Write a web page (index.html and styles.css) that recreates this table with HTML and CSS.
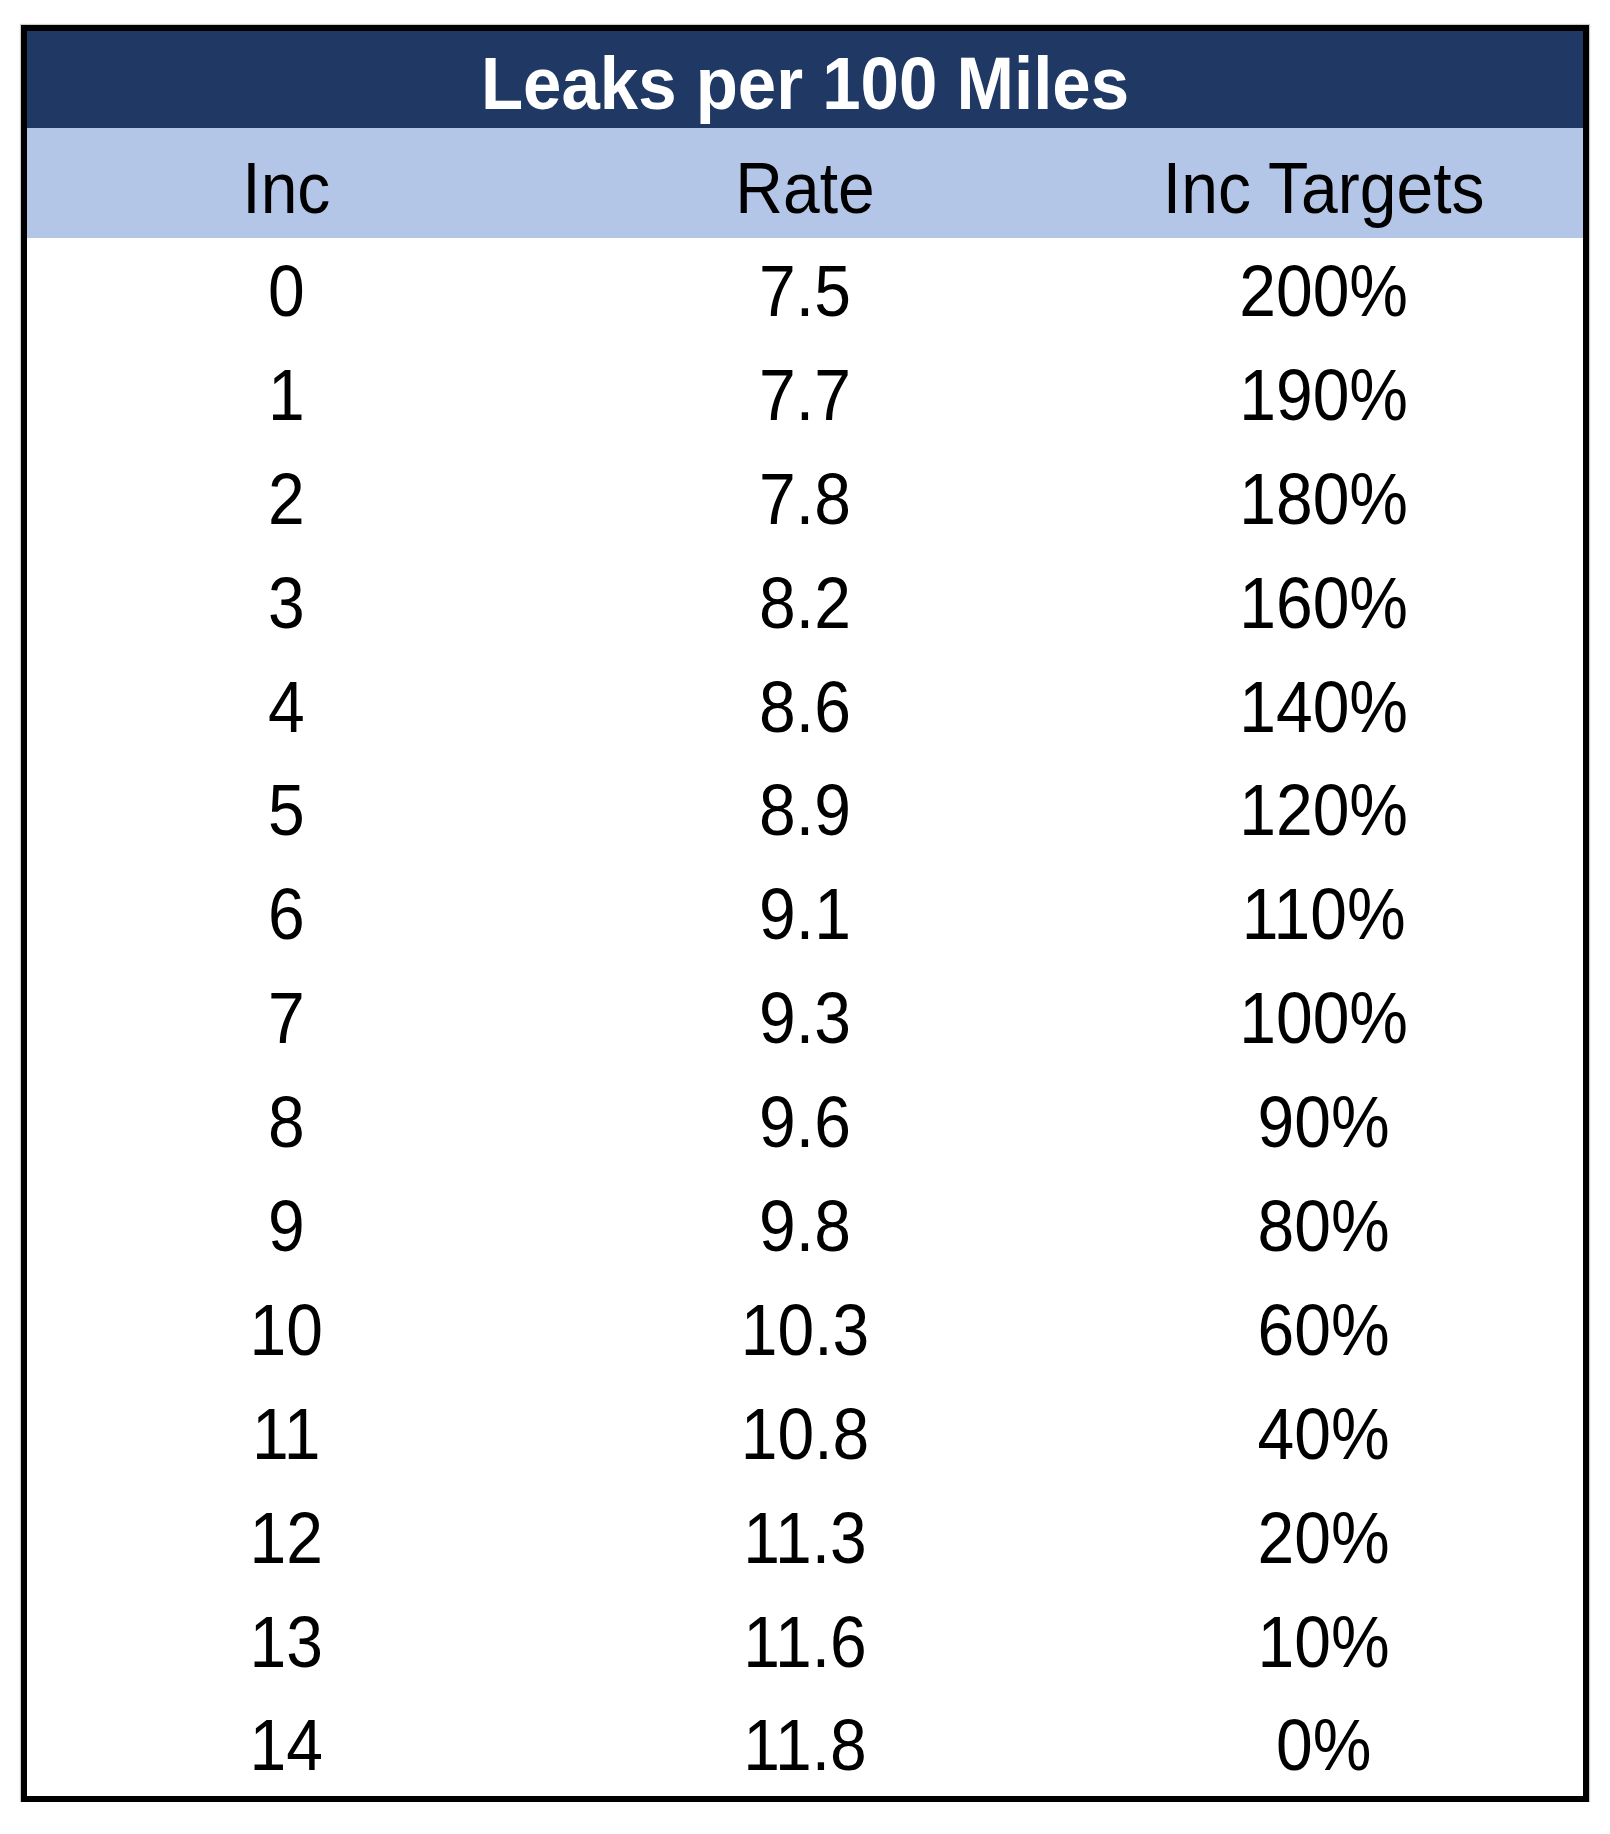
FILE: index.html
```html
<!DOCTYPE html>
<html>
<head>
<meta charset="utf-8">
<link rel="stylesheet" href="styles.css">
</head>
<body>
<div class="sheet">
  <div class="title"><span class="title-text">Leaks per 100 Miles</span></div>
  <div class="colhead">
    <div class="cell">Inc</div>
    <div class="cell">Rate</div>
    <div class="cell">Inc Targets</div>
  </div>
  <div class="body">
    <div class="row"><div class="cell">0</div><div class="cell">7.5</div><div class="cell">200%</div></div>
    <div class="row"><div class="cell">1</div><div class="cell">7.7</div><div class="cell">190%</div></div>
    <div class="row"><div class="cell">2</div><div class="cell">7.8</div><div class="cell">180%</div></div>
    <div class="row"><div class="cell">3</div><div class="cell">8.2</div><div class="cell">160%</div></div>
    <div class="row"><div class="cell">4</div><div class="cell">8.6</div><div class="cell">140%</div></div>
    <div class="row"><div class="cell">5</div><div class="cell">8.9</div><div class="cell">120%</div></div>
    <div class="row"><div class="cell">6</div><div class="cell">9.1</div><div class="cell">110%</div></div>
    <div class="row"><div class="cell">7</div><div class="cell">9.3</div><div class="cell">100%</div></div>
    <div class="row"><div class="cell">8</div><div class="cell">9.6</div><div class="cell">90%</div></div>
    <div class="row"><div class="cell">9</div><div class="cell">9.8</div><div class="cell">80%</div></div>
    <div class="row"><div class="cell">10</div><div class="cell">10.3</div><div class="cell">60%</div></div>
    <div class="row"><div class="cell">11</div><div class="cell">10.8</div><div class="cell">40%</div></div>
    <div class="row"><div class="cell">12</div><div class="cell">11.3</div><div class="cell">20%</div></div>
    <div class="row"><div class="cell">13</div><div class="cell">11.6</div><div class="cell">10%</div></div>
    <div class="row"><div class="cell">14</div><div class="cell">11.8</div><div class="cell">0%</div></div>
  </div>
</div>
</body>
</html>
```

FILE: styles.css
```css
html, body {
  margin: 0;
  padding: 0;
  background: #ffffff;
}

body {
  font-family: "Liberation Sans", Arial, sans-serif;
  color: #000000;
}

.sheet {
  margin: 25px 0 0 21px;
  width: 1568px;
  box-sizing: border-box;
  border: 6px solid #000000;
  box-shadow: 0 0 1px 1px rgba(0, 0, 0, 0.2);
  background: #ffffff;
}

.title {
  height: 97px;
  box-sizing: border-box;
  padding-top: 8px;
  background: #203864;
  color: #ffffff;
  font-weight: bold;
  font-size: 69px;
  line-height: 89px;
  text-align: center;
}

.title-text {
  display: inline-block;
  transform: scaleY(1.08);
}

.colhead {
  display: grid;
  grid-template-columns: 1fr 1fr 1fr;
  height: 110px;
  box-sizing: border-box;
  padding-top: 10px;
  background: #b4c6e7;
}

.colhead .cell {
  font-size: 66px;
  line-height: 100px;
  text-align: center;
  transform: scaleY(1.1);
}

.body {
  display: grid;
  grid-auto-rows: 103.9px;
}

.row {
  display: grid;
  grid-template-columns: 1fr 1fr 1fr;
  box-sizing: border-box;
  padding-top: 4px;
}

.row .cell {
  font-size: 66px;
  line-height: 99.9px;
  text-align: center;
  transform: scaleY(1.1);
}
```
